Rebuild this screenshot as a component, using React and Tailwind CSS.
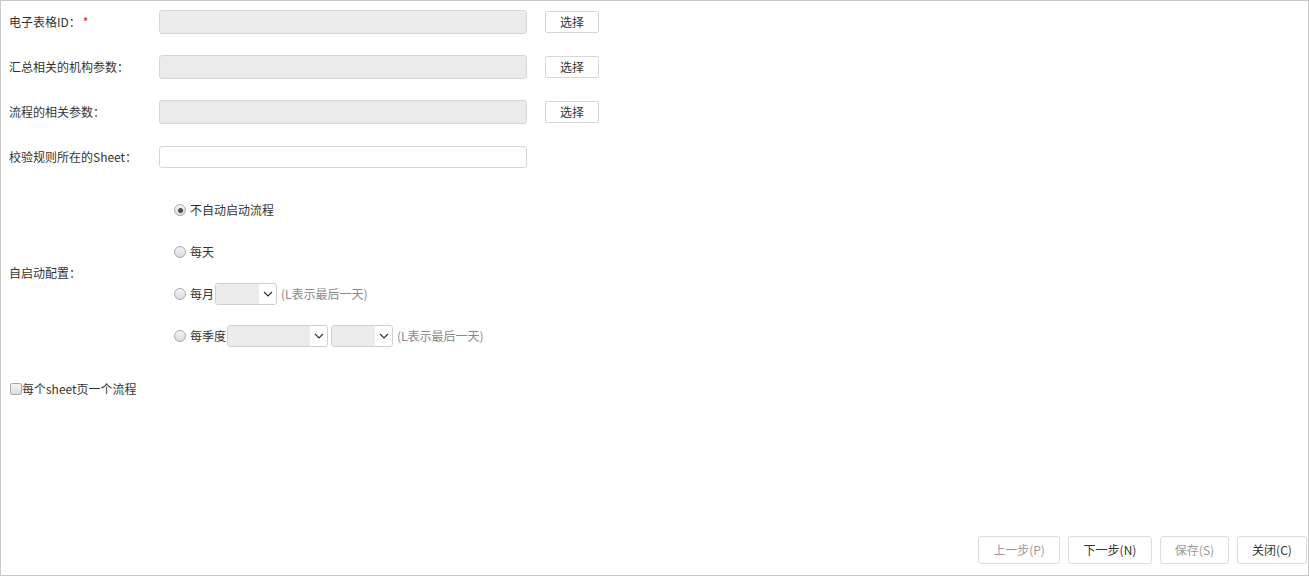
import React from "react";

const font = { fontFamily: '"Microsoft YaHei", "Noto Sans CJK SC", "Liberation Sans", sans-serif' };

const Radio = ({ checked }) => (
  <span className="w-[12px] h-[12px] rounded-full border border-[#a9a9a9] bg-gradient-to-b from-[#f4f4f4] to-[#dcdcdc] flex items-center justify-center shrink-0">
    {checked && <span className="w-[5px] h-[5px] rounded-full bg-[#4a4a4a]" />}
  </span>
);

const Select = ({ width, fill }) => (
  <div className={`flex h-[22px] border border-[#cfcfcf] rounded-[3px] overflow-hidden bg-white ${width}`}>
    <div className={`h-full bg-[#ebebeb] ${fill}`} />
    <div className="flex-1 flex items-center justify-center">
      <svg width="10" height="6" viewBox="0 0 10 6" fill="none">
        <path d="M1 1l4 4 4-4" stroke="#333" strokeWidth="1.2" />
      </svg>
    </div>
  </div>
);

const FieldRow = ({ label, required, disabled = true, button = true }) => (
  <div className="flex items-center h-[24px]">
    <div className="w-[150px] text-[12px] text-[#333]">
      {label}
      {required && <span className="text-[#e02020] ml-[2px]">*</span>}
    </div>
    {disabled ? (
      <div className="w-[368px] h-[24px] bg-[#ebebeb] border border-[#d6d6d6] rounded-[3px]" />
    ) : (
      <div className="w-[368px] h-[22px] bg-white border border-[#d6d6d6] rounded-[3px]" />
    )}
    {button && (
      <button className="ml-[18px] w-[54px] h-[22px] bg-white border border-[#d6d6d6] rounded-[2px] text-[12px] text-[#333]">
        选择
      </button>
    )}
  </div>
);

export default function App() {
  return (
    <div style={font} className="w-[1309px] h-[576px] border border-[#c8c8c8] bg-white flex flex-col">
      <div className="pl-[8px] pt-[9px] flex flex-col gap-[21px]">
        <FieldRow label="电子表格ID：" required />
        <FieldRow label="汇总相关的机构参数：" />
        <FieldRow label="流程的相关参数：" />
        <FieldRow label="校验规则所在的Sheet：" disabled={false} button={false} />
      </div>

      <div className="pl-[8px] mt-[20px] flex items-center">
        <div className="w-[165px] text-[12px] text-[#333]">自启动配置：</div>
        <div className="flex flex-col py-[10px] gap-[20px] text-[12px] text-[#333]">
          <div className="flex items-center h-[22px] gap-[4px]">
            <Radio checked />
            <span>不自动启动流程</span>
          </div>
          <div className="flex items-center h-[22px] gap-[4px]">
            <Radio />
            <span>每天</span>
          </div>
          <div className="flex items-center h-[22px]">
            <Radio />
            <span className="ml-[4px] mr-[1px]">每月</span>
            <Select width="w-[62px]" fill="w-[43px]" />
            <span className="ml-[4px] text-[#888]">(L表示最后一天)</span>
          </div>
          <div className="flex items-center h-[22px]">
            <Radio />
            <span className="ml-[4px] mr-[1px]">每季度</span>
            <Select width="w-[101px]" fill="w-[82px]" />
            <div className="ml-[3px]">
              <Select width="w-[62px]" fill="w-[43px]" />
            </div>
            <span className="ml-[4px] text-[#888]">(L表示最后一天)</span>
          </div>
        </div>
      </div>

      <div className="pl-[9px] mt-[23px] flex items-center h-[18px]">
        <span className="w-[12px] h-[12px] border border-[#a9a9a9] rounded-[2px] bg-gradient-to-b from-[#f4f4f4] to-[#dcdcdc]" />
        <span className="text-[12px] text-[#333]">每个sheet页一个流程</span>
      </div>

      <div className="flex-1" />

      <div className="flex justify-end gap-[8px] pr-[1px] pb-[11px] text-[12px]">
        <button className="w-[82px] h-[28px] border border-[#dcdcdc] rounded-[3px] bg-white text-[#999]">上一步(P)</button>
        <button className="w-[84px] h-[28px] border border-[#dcdcdc] rounded-[3px] bg-white text-[#333]">下一步(N)</button>
        <button className="w-[69px] h-[28px] border border-[#dcdcdc] rounded-[3px] bg-white text-[#999]">保存(S)</button>
        <button className="w-[70px] h-[28px] border border-[#dcdcdc] rounded-[3px] bg-white text-[#333]">关闭(C)</button>
      </div>
    </div>
  );
}
